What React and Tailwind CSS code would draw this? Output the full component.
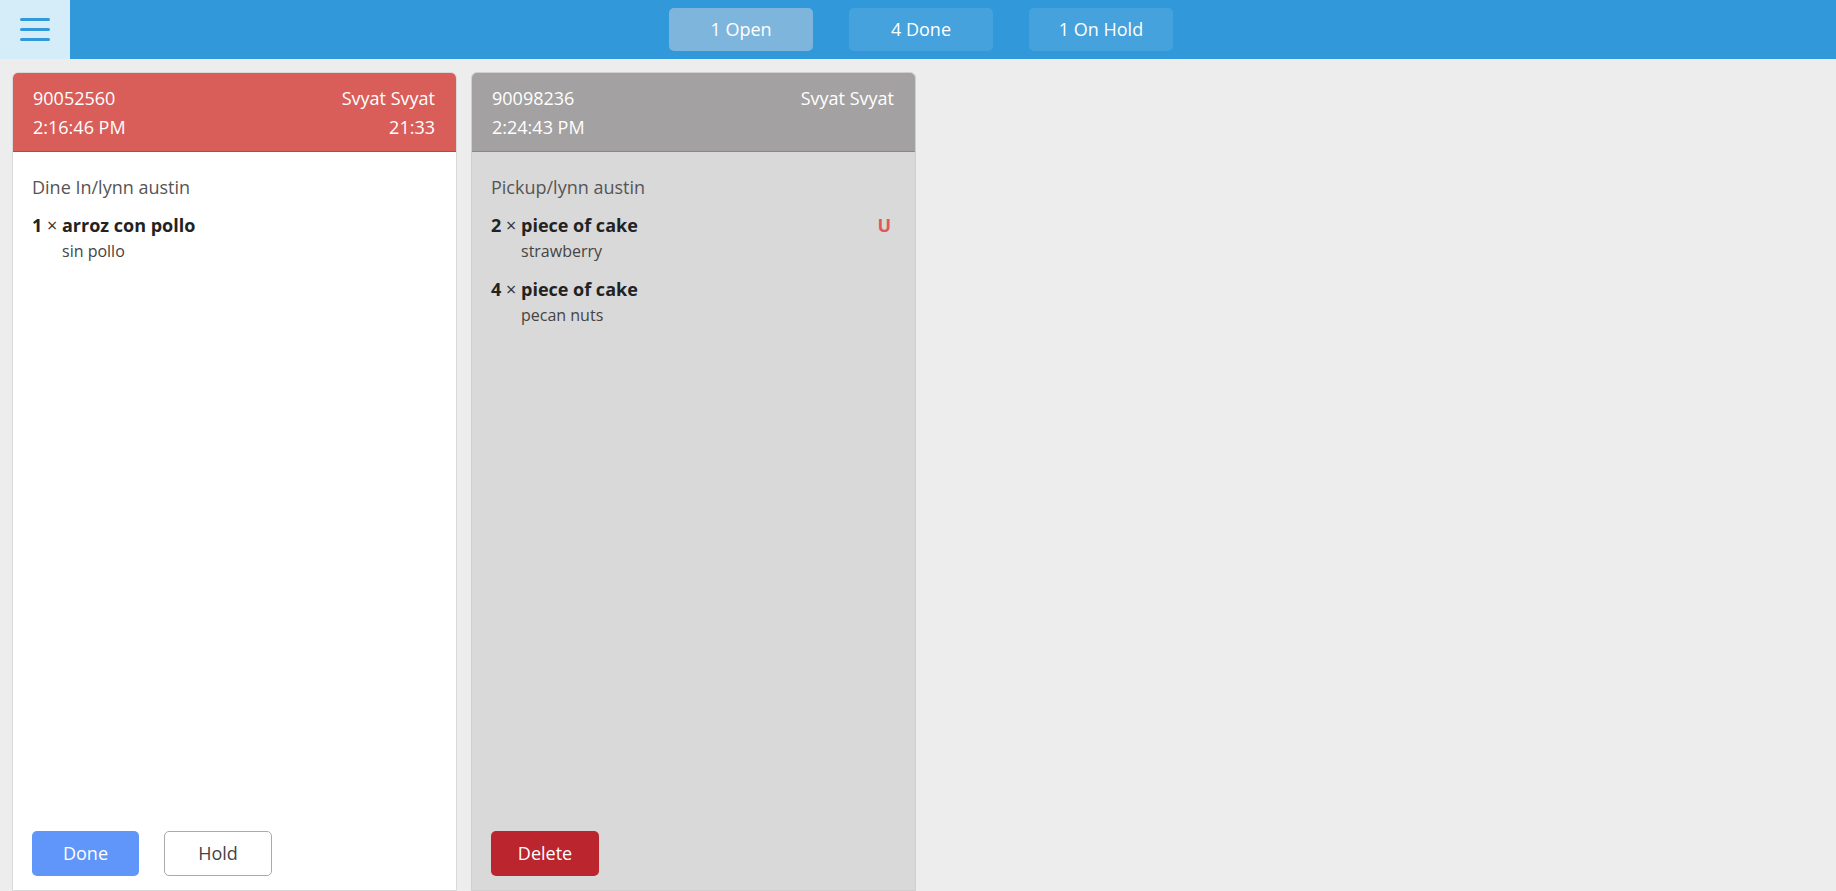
import React from "react";

function Item({ qty, name, mods, flag }) {
  return (
    <div className="flex items-start">
      <div className="w-[30px] shrink-0 font-bold text-[18px] leading-[27px] text-[#222]">
        {qty} <span className="font-normal text-[#333]">×</span>
      </div>
      <div className="flex-1 flex flex-col">
        <div className="font-bold text-[18px] leading-[27px] text-[#222]">{name}</div>
        {mods.map((m) => (
          <div key={m} className="text-[16px] leading-[24px] text-[#444]">{m}</div>
        ))}
      </div>
      {flag && (
        <div className="pr-[5px] font-bold text-[18px] leading-[27px] text-[#de5a5a]">{flag}</div>
      )}
    </div>
  );
}

function Card({ variant, id, user, time, elapsed, customer, items, buttons }) {
  const red = variant === "red";
  return (
    <div
      className={
        "w-[445px] shrink-0 flex flex-col rounded-t-[6px] border overflow-hidden " +
        (red ? "bg-white border-[#d9d9d9]" : "bg-[#d9d9d9] border-[#cfcfcf]")
      }
    >
      <div
        className={
          "pl-[20px] pr-[21px] pt-[11px] pb-[9px] border-b text-white text-[18px] leading-[29px] " +
          (red ? "bg-[#d95d59] border-[#c2423e]" : "bg-[#a3a1a1] border-[#8a8888]")
        }
      >
        <div className="flex justify-between">
          <span>{id}</span>
          <span>{user}</span>
        </div>
        <div className="flex justify-between">
          <span>{time}</span>
          <span>{elapsed}</span>
        </div>
      </div>
      <div className="flex-1 flex flex-col px-[19px] pt-[22px] pb-[14px]">
        <div className="text-[18px] leading-[27px] text-[#555] mb-[11px]">{customer}</div>
        <div className="flex flex-col gap-[13px]">
          {items.map((it, i) => (
            <Item key={i} {...it} />
          ))}
        </div>
        <div className="flex-1" />
        <div className="flex gap-[25px]">{buttons}</div>
      </div>
    </div>
  );
}

export default function App() {
  return (
    <div
      className="h-screen w-full flex flex-col bg-[#ededed] overflow-hidden"
      style={{ fontFamily: '"Open Sans", "Noto Sans", sans-serif' }}
    >
      <header className="h-[59px] shrink-0 flex bg-[#3199da]">
        <div className="w-[70px] shrink-0 bg-[#d4edf8] flex flex-col items-center justify-center gap-[7px]">
          <div className="w-[30px] h-[3px] rounded-full bg-[#3199da]" />
          <div className="w-[30px] h-[3px] rounded-full bg-[#3199da]" />
          <div className="w-[30px] h-[3px] rounded-full bg-[#3199da]" />
        </div>
        <div className="flex-1 flex justify-center items-start pt-[8px] gap-[36px]">
          <button className="w-[144px] h-[43px] rounded-[5px] bg-[#7eb5dc] text-white text-[18px]">
            1 Open
          </button>
          <button className="w-[144px] h-[43px] rounded-[5px] bg-[#45a2dd] text-white text-[18px]">
            4 Done
          </button>
          <button className="w-[144px] h-[43px] rounded-[5px] bg-[#45a2dd] text-white text-[18px]">
            1 On Hold
          </button>
        </div>
        <div className="w-[64px] shrink-0" />
      </header>
      <main className="flex-1 flex gap-[14px] pl-[12px] pt-[13px] min-h-0">
        <Card
          variant="red"
          id="90052560"
          user="Svyat Svyat"
          time="2:16:46 PM"
          elapsed="21:33"
          customer="Dine In/lynn austin"
          items={[{ qty: 1, name: "arroz con pollo", mods: ["sin pollo"] }]}
          buttons={
            <>
              <button className="w-[107px] h-[45px] rounded-[5px] bg-[#6096f9] text-white text-[18px]">
                Done
              </button>
              <button className="w-[108px] h-[45px] rounded-[5px] bg-white border border-[#aaaaaa] text-[#444] text-[18px]">
                Hold
              </button>
            </>
          }
        />
        <Card
          variant="gray"
          id="90098236"
          user="Svyat Svyat"
          time="2:24:43 PM"
          elapsed=""
          customer="Pickup/lynn austin"
          items={[
            { qty: 2, name: "piece of cake", mods: ["strawberry"], flag: "U" },
            { qty: 4, name: "piece of cake", mods: ["pecan nuts"] },
          ]}
          buttons={
            <button className="w-[108px] h-[45px] rounded-[5px] bg-[#bb252d] text-white text-[18px]">
              Delete
            </button>
          }
        />
      </main>
    </div>
  );
}
